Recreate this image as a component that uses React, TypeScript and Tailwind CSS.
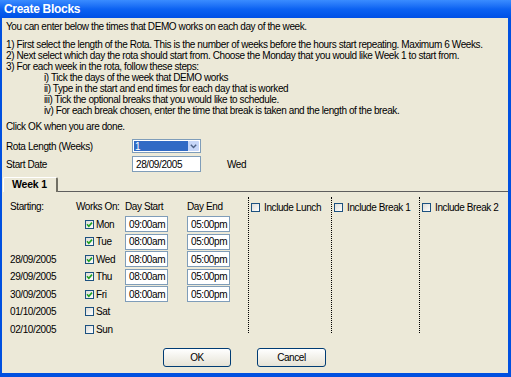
import React from 'react';

function Check({ checked }: { checked?: boolean }) {
  return (
    <span className="flex h-[9px] w-[9px] shrink-0 items-center justify-center border border-[#1c5180] bg-gradient-to-br from-[#dcdcd7] to-white">
      {checked && (
        <svg width="7" height="7" viewBox="0 0 7 7">
          <path d="M1 3.3 L2.8 5.2 L6 1.6" fill="none" stroke="#21a121" strokeWidth="1.6" />
        </svg>
      )}
    </span>
  );
}

function TimeBox({ value }: { value: string }) {
  return (
    <div className="flex h-[16px] w-[43px] items-center border border-[#7f9db9] bg-white px-[3px]">
      {value}
    </div>
  );
}

const days = [
  { date: '', day: 'Mon', on: true, start: '09:00am', end: '05:00pm' },
  { date: '', day: 'Tue', on: true, start: '08:00am', end: '05:00pm' },
  { date: '28/09/2005', day: 'Wed', on: true, start: '08:00am', end: '05:00pm' },
  { date: '29/09/2005', day: 'Thu', on: true, start: '08:00am', end: '05:00pm' },
  { date: '30/09/2005', day: 'Fri', on: true, start: '08:00am', end: '05:00pm' },
  { date: '01/10/2005', day: 'Sat', on: false, start: '', end: '' },
  { date: '02/10/2005', day: 'Sun', on: false, start: '', end: '' },
];

const breaks = [
  { label: 'Include Lunch', w: 'w-[83px]' },
  { label: 'Include Break 1', w: 'w-[88px]' },
  { label: 'Include Break 2', w: 'flex-1' },
];

export default function App() {
  return (
    <div className="flex h-[377px] w-[511px] flex-col bg-[#0050e0] font-['Liberation_Sans',Arial,sans-serif] text-[10px] tracking-[-0.4px] text-black">
      {/* title bar */}
      <div className="flex h-[18px] items-center bg-gradient-to-b from-[#3a8cff] via-[#0c62f2] to-[#0050e6] px-[4px] text-[12px] font-bold tracking-[-0.3px] text-white">
        Create Blocks
      </div>

      <div className="mb-[4px] ml-[2px] mr-[3px] flex flex-1 flex-col bg-[#ece9d8] pl-[4px] pt-[3px]">
        <div className="h-[12px] leading-[12px]">
          You can enter below the times that DEMO works on each day of the week.
        </div>
        <div className="mt-[6px] leading-[11px]">
          <div>1) First select the length of the Rota. This is the number of weeks before the hours start repeating. Maximum 6 Weeks.</div>
          <div>2) Next select which day the rota should start from. Choose the Monday that you would like Week 1 to start from.</div>
          <div>3) For each week in the rota, follow these steps:</div>
          <div className="pl-[38px]">i) Tick the days of the week that DEMO works</div>
          <div className="pl-[38px]">ii) Type in the start and end times for each day that is worked</div>
          <div className="pl-[38px]">iii) Tick the optional breaks that you would like to schedule.</div>
          <div className="pl-[38px]">iv) For each break chosen, enter the time that break is taken and the length of the break.</div>
        </div>
        <div className="mt-[5px] h-[12px] leading-[12px]">Click OK when you are done.</div>

        <div className="mt-[6px] flex h-[14px] items-center">
          <span className="w-[126px]">Rota Length (Weeks)</span>
          <div className="flex h-[14px] w-[69px] border border-[#7f9db9] bg-white p-px">
            <div className="flex flex-1 items-center bg-[#316ac5] px-[1px] text-white">1</div>
            <div className="flex w-[11px] items-center justify-center rounded-[1px] bg-[#c6d6f8]">
              <svg width="7" height="5" viewBox="0 0 7 5">
                <path d="M0.8 0.8 L3.5 3.5 L6.2 0.8" fill="none" stroke="#4d6185" strokeWidth="1.4" />
              </svg>
            </div>
          </div>
        </div>
        <div className="mt-[3px] flex h-[16px] items-center">
          <span className="w-[126px]">Start Date</span>
          <div className="flex h-[16px] w-[69px] items-center border border-[#7f9db9] bg-white px-[3px]">28/09/2005</div>
          <span className="ml-[26px]">Wed</span>
        </div>

        {/* tab strip */}
        <div className="-ml-[4px] mt-[5px] flex h-[15px] items-end">
          <div className="ml-[1px] flex h-[15px] w-[55px] items-center rounded-t-[2px] border-l border-r-2 border-t border-l-white border-r-[#716f64] border-t-white pl-[8px] text-[10.5px] font-bold tracking-[-0.2px]">
            Week 1
          </div>
          <div className="flex-1 border-b border-[#5e5e5e]" />
        </div>

        {/* week panel */}
        <div className="-ml-[4px] flex h-[148px]">
          <div className="w-[246px] pl-[8px] pt-[8px]">
            <div className="flex h-[12px] items-center">
              <span className="w-[66px]">Starting:</span>
              <span className="w-[49px]">Works On:</span>
              <span className="w-[62px]">Day Start</span>
              <span>Day End</span>
            </div>
            <div className="mt-[4px] flex flex-col">
              {days.map((d) => (
                <div key={d.day} className="flex h-[17.5px] items-start">
                  <span className="flex h-[16px] w-[66px] items-center">{d.date}</span>
                  <span className="flex h-[16px] w-[49px] items-center pl-[9px]">
                    <Check checked={d.on} />
                    <span className="ml-[2px]">{d.day}</span>
                  </span>
                  <span className="w-[62px]">{d.start && <TimeBox value={d.start} />}</span>
                  <span>{d.end && <TimeBox value={d.end} />}</span>
                </div>
              ))}
            </div>
          </div>
          {breaks.map((b) => (
            <div key={b.label} className={`${b.w} mt-[5px] h-[136px] border-l border-dotted border-black`}>
              <div className="mt-[6px] flex h-[9px] items-center pl-[2px]">
                <Check />
                <span className="ml-[4px]">{b.label}</span>
              </div>
            </div>
          ))}
        </div>

        <div className="-ml-[4px] mt-[8px] flex gap-[26px] pl-[161px]">
          <button className="h-[19px] w-[68px] rounded-[3px] border border-[#003c74] bg-gradient-to-b from-white to-[#e6e3d6] text-[10px]">
            OK
          </button>
          <button className="h-[19px] w-[69px] rounded-[3px] border border-[#003c74] bg-gradient-to-b from-white to-[#e6e3d6] text-[10px]">
            Cancel
          </button>
        </div>
      </div>
    </div>
  );
}
